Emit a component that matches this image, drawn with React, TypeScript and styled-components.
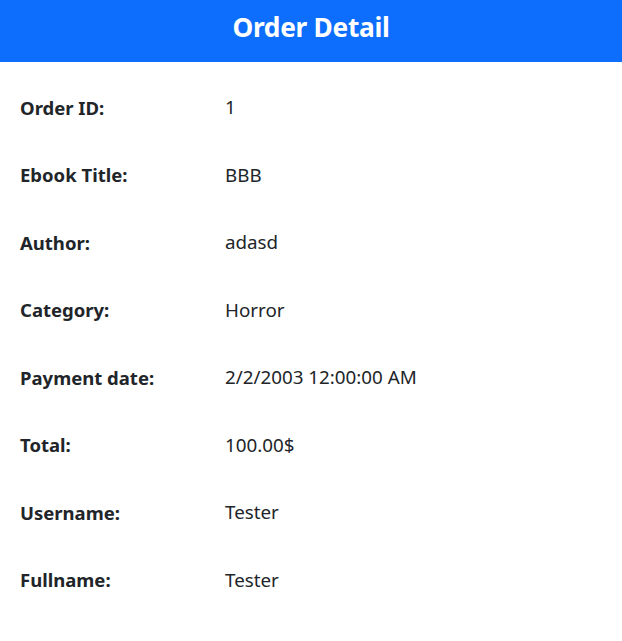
import React from "react";
import styled, { createGlobalStyle } from "styled-components";

const Global = createGlobalStyle`
  html, body { margin: 0; padding: 0; background: #fff; }
  body { font-family: "Segoe UI", "Noto Sans", "Open Sans", sans-serif; color: #212529; }
`;

const Page = styled.div`
  display: flex;
  flex-direction: column;
`;

const Header = styled.header`
  height: 62px;
  box-sizing: border-box;
  padding-bottom: 9px;
  background: #0d6efd;
  color: #fff;
  display: flex;
  align-items: center;
  justify-content: center;
`;

const Title = styled.h1`
  margin: 0;
  font-size: 26.3px;
  font-weight: 700;
  letter-spacing: -0.3px;
`;

const Table = styled.div`
  display: grid;
  grid-template-columns: 205px 1fr;
  grid-auto-rows: 67.5px;
  padding: 11.5px 20px 0;
`;

const Label = styled.div`
  display: flex;
  align-items: center;
  font-weight: 700;
  font-size: 18.5px;
`;

const Value = styled.div`
  display: flex;
  align-items: center;
  font-size: 18.8px;
`;

const rows: [string, string][] = [
  ["Order ID:", "1"],
  ["Ebook Title:", "BBB"],
  ["Author:", "adasd"],
  ["Category:", "Horror"],
  ["Payment date:", "2/2/2003 12:00:00 AM"],
  ["Total:", "100.00$"],
  ["Username:", "Tester"],
  ["Fullname:", "Tester"],
];

export default function App() {
  return (
    <Page>
      <Global />
      <Header>
        <Title>Order Detail</Title>
      </Header>
      <Table>
        {rows.map(([l, v]) => (
          <React.Fragment key={l}>
            <Label>{l}</Label>
            <Value>{v}</Value>
          </React.Fragment>
        ))}
      </Table>
    </Page>
  );
}
